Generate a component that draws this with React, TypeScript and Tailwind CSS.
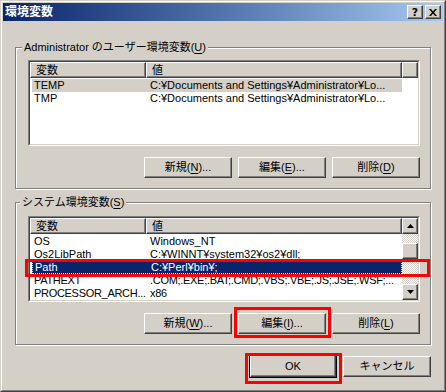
import React from "react";

// Classic Windows 2000 "環境変数" dialog

const raised =
  "border border-t-white border-l-white border-r-[#404040] border-b-[#404040] shadow-[inset_-1px_-1px_0_#808080] bg-[#d4d0c8]";

const Key: React.FC<{ c: string }> = ({ c }) => (
  <span className="underline underline-offset-[2px] decoration-1">{c}</span>
);

type Row = { name: string; value: string; state?: "gray" | "focus"; tight?: boolean };

const userVars: Row[] = [
  { name: "TEMP", value: "C:¥Documents and Settings¥Administrator¥Lo...", state: "gray" },
  { name: "TMP", value: "C:¥Documents and Settings¥Administrator¥Lo..." },
];

const sysVars: Row[] = [
  { name: "OS", value: "Windows_NT" },
  { name: "Os2LibPath", value: "C:¥WINNT¥system32¥os2¥dll;" },
  { name: "Path", value: "C:¥Perl¥bin¥;", state: "focus" },
  { name: "PATHEXT", value: ".COM;.EXE;.BAT;.CMD;.VBS;.VBE;.JS;.JSE;.WSF;...", tight: true },
  { name: "PROCESSOR_ARCH...", value: "x86", tight: true },
];

const Arrow: React.FC<{ up?: boolean }> = ({ up }) => (
  <svg width="7" height="4" viewBox="0 0 7 4">
    {up ? <path d="M3.5 0 L7 4 L0 4 Z" fill="#000" /> : <path d="M0 0 L7 0 L3.5 4 Z" fill="#000" />}
  </svg>
);

const Button: React.FC<{ children: React.ReactNode; def?: boolean }> = ({ children, def }) =>
  def ? (
    <div className="w-[88px] h-[24px] border border-black">
      <div className={`h-full flex items-center justify-center ${raised}`}>{children}</div>
    </div>
  ) : (
    <div className={`w-[88px] h-[21px] flex items-center justify-center ${raised}`}>{children}</div>
  );

const Header: React.FC<{ filler?: boolean }> = ({ filler }) => (
  <div className="flex h-[16px] shrink-0">
    <div className={`w-[116px] pl-[5px] flex items-center ${raised}`}>変数</div>
    <div className={`w-[256px] pl-[5px] flex items-center ${raised}`}>値</div>
    {filler && <div className={`flex-1 ${raised}`} />}
  </div>
);

const Rows: React.FC<{ rows: Row[] }> = ({ rows }) => (
  <div className="flex flex-col mt-[1px]">
    {rows.map((r) => (
      <div
        key={r.name}
        className={`flex h-[13px] ml-[2px] w-[370px] items-center whitespace-nowrap ${
          r.state === "gray"
            ? "bg-[#d4d0c8]"
            : r.state === "focus"
            ? "bg-[#0a246a] text-white border border-dotted border-[#e8e8c0]"
            : ""
        }`}
      >
        <div className={`w-[116px] pl-[2px] ${r.tight ? "tracking-[-0.3px]" : ""}`}>{r.name}</div>
        <div className={`flex-1 pl-[2px] ${r.tight ? "tracking-[-0.3px]" : ""}`}>{r.value}</div>
      </div>
    ))}
  </div>
);

const ListFrame: React.FC<{ children: React.ReactNode; className?: string }> = ({ children, className }) => (
  <div className={`h-[86px] border border-t-[#808080] border-l-[#808080] border-r-white border-b-white ${className ?? ""}`}>
    <div className="h-full border border-t-[#404040] border-l-[#404040] border-r-[#d4d0c8] border-b-[#d4d0c8] bg-white overflow-hidden">
      {children}
    </div>
  </div>
);

const App: React.FC = () => {
  return (
    <div className="relative w-[446px] h-[392px] bg-[#d4d0c8] font-['Liberation_Sans','Noto_Sans_CJK_JP',sans-serif] text-[11px] leading-[13px] text-black overflow-hidden">
      <div className="h-full border border-t-[#d4d0c8] border-l-[#d4d0c8] border-r-[#404040] border-b-[#404040]">
        <div className="h-full border border-t-white border-l-white border-r-[#808080] border-b-[#808080] p-px flex flex-col">
          {/* Title bar */}
          <div className="h-[18px] shrink-0 flex items-center bg-linear-to-r from-[#0a246a] to-[#a6caf0] pl-[2px] pr-[2px]">
            <span className="text-white font-bold text-[12px] leading-[14px]">環境変数</span>
            <div className="ml-auto flex gap-[2px]">
              <div className={`w-[16px] h-[14px] flex items-center justify-center ${raised}`}>
                <span className="font-bold text-[11px] leading-[11px] font-['DejaVu_Sans',sans-serif]">?</span>
              </div>
              <div className={`w-[16px] h-[14px] flex items-center justify-center ${raised}`}>
                <svg width="8" height="7" viewBox="0 0 8 7">
                  <path d="M0 0 L2 0 L4 2.5 L6 0 L8 0 L5 3.5 L8 7 L6 7 L4 4.5 L2 7 L0 7 L3 3.5 Z" fill="#000" />
                </svg>
              </div>
            </div>
          </div>

          {/* User variables */}
          <fieldset className="mt-[19px] ml-[12px] w-[416px] border border-[#808080] shadow-[inset_1px_1px_0_#fff,1px_1px_0_#fff] pl-[12px] pr-[10px] pb-[10px]">
            <legend className="-ml-[6px] px-[2px] h-[14px] leading-[14px] bg-[#d4d0c8]">
              Administrator のユーザー環境変数(<Key c="U" />)
            </legend>
            <ListFrame className="mt-[6px]">
              <Header filler />
              <Rows rows={userVars} />
            </ListFrame>
            <div className="mt-[11px] flex justify-end gap-[6px]">
              <Button>新規(<Key c="N" />)...</Button>
              <Button>編集(<Key c="E" />)...</Button>
              <Button>削除(<Key c="D" />)</Button>
            </div>
          </fieldset>

          {/* System variables */}
          <fieldset className="mt-[6px] ml-[12px] w-[416px] border border-[#808080] shadow-[inset_1px_1px_0_#fff,1px_1px_0_#fff] pl-[12px] pr-[10px] pb-[10px]">
            <legend className="-ml-[8px] px-[2px] h-[14px] leading-[14px] bg-[#d4d0c8]">
              システム環境変数(<Key c="S" />)
            </legend>
            <ListFrame className="mt-[7px]">
              <div className="flex h-full">
                <div className="flex-1 flex flex-col">
                  <Header />
                  <Rows rows={sysVars} />
                </div>
                <div className="w-[16px] flex flex-col">
                  <div className={`h-[16px] flex items-center justify-center ${raised}`}>
                    <Arrow up />
                  </div>
                  <div className="flex-1 bg-[repeating-conic-gradient(#ffffff_0%_25%,#d4d0c8_0%_50%)] bg-size-[2px_2px]">
                    <div className={`h-[16px] mt-[9px] ${raised}`} />
                  </div>
                  <div className={`h-[16px] flex items-center justify-center ${raised}`}>
                    <Arrow />
                  </div>
                </div>
              </div>
            </ListFrame>
            <div className="mt-[11px] flex justify-end gap-[6px]">
              <Button>新規(<Key c="W" />)...</Button>
              <Button>編集(<Key c="I" />)...</Button>
              <Button>削除(<Key c="L" />)</Button>
            </div>
          </fieldset>

          {/* Dialog buttons */}
          <div className="mt-[9px] mr-[12px] flex justify-end items-center gap-[6px]">
            <Button def>OK</Button>
            <Button>キャンセル</Button>
          </div>
        </div>
      </div>

      {/* Red annotation boxes */}
      <div className="absolute left-[25px] top-[259px] w-[405px] h-[18px] border-[3px] border-[#ff0000] pointer-events-none" />
      <div className="absolute left-[234px] top-[307px] w-[97px] h-[31px] border-[3px] border-[#ff0000] pointer-events-none" />
      <div className="absolute left-[245px] top-[353px] w-[97px] h-[31px] border-[3px] border-[#ff0000] pointer-events-none" />
    </div>
  );
};

export default App;
